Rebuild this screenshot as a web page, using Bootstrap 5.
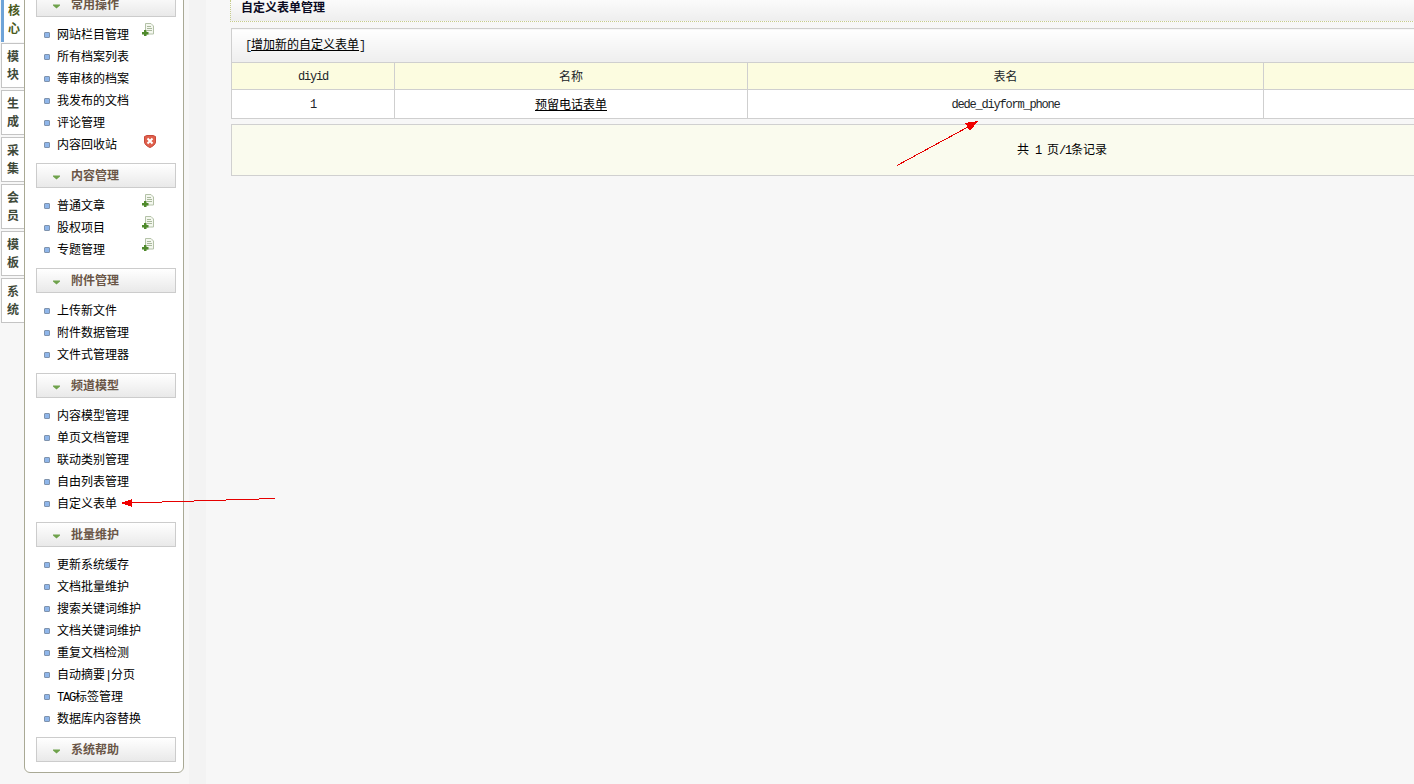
<!DOCTYPE html>
<html lang="zh-CN">
<head>
<meta charset="utf-8">
<title>自定义表单管理</title>
<link href="https://cdn.jsdelivr.net/npm/bootstrap@5.3.0/dist/css/bootstrap.min.css" rel="stylesheet">
<style>
html,body{height:784px;overflow:hidden;}
body{background:#f7f7f7;color:#000;font:12px/22px "Noto Sans CJK SC","Liberation Sans",sans-serif;}
a{color:#000;}
.lat{font-family:"Liberation Mono",monospace;font-size:12px;letter-spacing:-1.2px;}
.side-item .lat{line-height:1;}
.stage{height:784px;overflow:hidden;position:relative;}
.tabs{width:24px;margin-top:-4px;flex:none;}
.tab-item{width:23px;height:45px;margin:0 0 2px 1px;padding-top:3px;background:#fff;border:1px solid #c4c4c4;border-right:0;font-weight:700;line-height:18px;color:#3f4a3a;text-align:center;}
.tab-item.on{border-left:3px solid #6ea3d8;border-top:0;border-bottom:0;color:#4a5a20;height:46px;margin-bottom:1px;padding-top:5px;}
.side{width:160px;flex:none;height:794px;margin-top:-21px;padding:12px 7px 0 11px;background:#fff;border:1px solid #a9a995;border-radius:0 0 6px 6px;}
.side-head{height:25px;border:1px solid #ccc;background:linear-gradient(#fff,#e9e9e9);font-weight:700;color:#6a5647;line-height:22px;padding-left:16px;}
.side-head svg{margin-right:11px;vertical-align:0;}
.side-list{padding:6px 0 0 8px;margin:0 0 8px;}
.side-item{height:22px;line-height:22px;padding-right:20px;}
.dot{width:6px;height:6px;margin:1px 7px 0 0;flex:none;border:1px solid #7f93ad;border-radius:1px;background:#8fb6ea;}
.ico{margin-left:auto;flex:none;}
.ico-page{margin-right:2px;margin-top:0;}
.ico-shield{margin-top:2px;}
.strip{width:17px;margin-left:5px;flex:none;background:#f3f3f3;}
.pane{width:1687px;flex:none;padding-left:24px;}
.title-bar{height:22px;border-bottom:1px dotted #c6cc8a;border-left:1px dotted #c6cc8a;background:linear-gradient(#fbfbfb,#eee);padding-left:10px;font-weight:700;line-height:14px;color:#0a0a22;margin-bottom:6px;margin-left:0;}
.form-tbl{width:1662px;margin-left:1px;table-layout:fixed;--bs-table-border-color:#cfcfcf;--bs-border-color:#cfcfcf;}
.form-tbl.table>*>*>*{padding:0;vertical-align:middle;text-align:center;line-height:18px;border:1px solid #cfcfcf;}
.row-tool{height:34px;}
.row-tool>td{--bs-table-bg:transparent;background:linear-gradient(#fff,#eee);}
.form-tbl.table>*>.row-tool>td{text-align:left;padding:0 0 2px 13px;}
.row-head{height:27px;}
.row-head>td{--bs-table-bg:#fcfce0;}
.row-data{height:29px;}
.row-data>td{--bs-table-bg:#fff;}
.pager-box{width:1662px;height:52px;margin:5px 0 0 1px;background:#fafbee;border:1px solid #d0d0d0;line-height:48px;text-align:center;}
.note-arrow{position:absolute;left:0;top:0;pointer-events:none;}
</style>
</head>
<body>
<svg width="0" height="0" class="d-block position-absolute">
  <defs>
    <symbol id="pg" viewBox="0 0 12 13">
      <path d="M3.5.5h5.500l2.500 2.500v8h-8z" fill="#f4f7ef" stroke="#b4c2a8"/>
      <path d="M5 3.500h4M5 5.500h5M5 7.500h5" stroke="#a9b89c"/>
      <path d="M2 7h2.500v2h2v2.500h-2v1.500h-2.500v-1.500h-2v-2.500h2z" fill="#4f8a2c"/>
    </symbol>
    <symbol id="sh" viewBox="0 0 12 13">
      <path d="M.5 1.500 3 .5h6l2.500 1v5.500c0 2-2.500 4.500-5.500 5.500C3 11.500.5 9 .5 7z" fill="#e0604c" stroke="#c8493a"/>
      <path d="M3.500 3.500l5 5M8.500 3.500l-5 5" stroke="#fff" stroke-width="2"/>
    </symbol>
    <symbol id="cv" viewBox="0 0 7 5">
      <path d="M0 .5h7v1L3.500 4.500 0 1.500z" fill="#6fa24c"/>
    </symbol>
  </defs>
</svg>
<div class="stage d-flex">
  <div class="tabs">
    <div class="tab-item on">核<br>心</div>
    <div class="tab-item">模<br>块</div>
    <div class="tab-item">生<br>成</div>
    <div class="tab-item">采<br>集</div>
    <div class="tab-item">会<br>员</div>
    <div class="tab-item">模<br>板</div>
    <div class="tab-item">系<br>统</div>
  </div>
  <div class="side">
    <div class="side-head"><svg width="7" height="5"><use href="#cv"/></svg>常用操作</div>
    <ul class="side-list list-unstyled">
      <li class="side-item d-flex align-items-center"><i class="dot"></i>网站栏目管理<svg class="ico ico-page align-self-start" width="12" height="13"><use href="#pg"/></svg></li>
      <li class="side-item d-flex align-items-center"><i class="dot"></i>所有档案列表</li>
      <li class="side-item d-flex align-items-center"><i class="dot"></i>等审核的档案</li>
      <li class="side-item d-flex align-items-center"><i class="dot"></i>我发布的文档</li>
      <li class="side-item d-flex align-items-center"><i class="dot"></i>评论管理</li>
      <li class="side-item d-flex align-items-center"><i class="dot"></i>内容回收站<svg class="ico ico-shield align-self-start" width="12" height="13"><use href="#sh"/></svg></li>
    </ul>
    <div class="side-head"><svg width="7" height="5"><use href="#cv"/></svg>内容管理</div>
    <ul class="side-list list-unstyled">
      <li class="side-item d-flex align-items-center"><i class="dot"></i>普通文章<svg class="ico ico-page align-self-start" width="12" height="13"><use href="#pg"/></svg></li>
      <li class="side-item d-flex align-items-center"><i class="dot"></i>股权项目<svg class="ico ico-page align-self-start" width="12" height="13"><use href="#pg"/></svg></li>
      <li class="side-item d-flex align-items-center"><i class="dot"></i>专题管理<svg class="ico ico-page align-self-start" width="12" height="13"><use href="#pg"/></svg></li>
    </ul>
    <div class="side-head"><svg width="7" height="5"><use href="#cv"/></svg>附件管理</div>
    <ul class="side-list list-unstyled">
      <li class="side-item d-flex align-items-center"><i class="dot"></i>上传新文件</li>
      <li class="side-item d-flex align-items-center"><i class="dot"></i>附件数据管理</li>
      <li class="side-item d-flex align-items-center"><i class="dot"></i>文件式管理器</li>
    </ul>
    <div class="side-head"><svg width="7" height="5"><use href="#cv"/></svg>频道模型</div>
    <ul class="side-list list-unstyled">
      <li class="side-item d-flex align-items-center"><i class="dot"></i>内容模型管理</li>
      <li class="side-item d-flex align-items-center"><i class="dot"></i>单页文档管理</li>
      <li class="side-item d-flex align-items-center"><i class="dot"></i>联动类别管理</li>
      <li class="side-item d-flex align-items-center"><i class="dot"></i>自由列表管理</li>
      <li class="side-item d-flex align-items-center"><i class="dot"></i>自定义表单</li>
    </ul>
    <div class="side-head"><svg width="7" height="5"><use href="#cv"/></svg>批量维护</div>
    <ul class="side-list list-unstyled">
      <li class="side-item d-flex align-items-center"><i class="dot"></i>更新系统缓存</li>
      <li class="side-item d-flex align-items-center"><i class="dot"></i>文档批量维护</li>
      <li class="side-item d-flex align-items-center"><i class="dot"></i>搜索关键词维护</li>
      <li class="side-item d-flex align-items-center"><i class="dot"></i>文档关键词维护</li>
      <li class="side-item d-flex align-items-center"><i class="dot"></i>重复文档检测</li>
      <li class="side-item d-flex align-items-center"><i class="dot"></i><span>自动摘要<span class="lat">|</span>分页</span></li>
      <li class="side-item d-flex align-items-center"><i class="dot"></i><span><span class="lat">TAG</span>标签管理</span></li>
      <li class="side-item d-flex align-items-center"><i class="dot"></i>数据库内容替换</li>
    </ul>
    <div class="side-head"><svg width="7" height="5"><use href="#cv"/></svg>系统帮助</div>
  </div>
  <div class="strip"></div>
  <div class="pane">
    <div class="title-bar">自定义表单管理</div>
    <table class="table table-bordered form-tbl mb-0">
      <colgroup><col style="width:163px"><col style="width:353px"><col style="width:516px"><col></colgroup>
      <tbody>
        <tr class="row-tool"><td colspan="4"><span class="lat">[</span><a href="#">增加新的自定义表单</a><span class="lat">]</span></td></tr>
        <tr class="row-head"><td><span class="lat">diyid</span></td><td>名称</td><td>表名</td><td></td></tr>
        <tr class="row-data"><td><span class="lat">1</span></td><td><a href="#">预留电话表单</a></td><td><span class="lat">dede_diyform_phone</span></td><td></td></tr>
      </tbody>
    </table>
    <div class="pager-box">共<span class="lat"> 1 </span>页<span class="lat">/1</span>条记录</div>
  </div>
  <svg class="note-arrow" width="1414" height="784" shape-rendering="crispEdges">
    <path d="M275 498.500 130 503" stroke="#e60000" fill="none"/>
    <path d="M121 503l11-4v8z" fill="#f00000"/>
    <path d="M897 165.500 968 127" stroke="#e60000" fill="none"/>
    <path d="M978 121l-13 2 5 8z" fill="#f00000"/>
  </svg>
</div>
<script src="https://cdn.jsdelivr.net/npm/bootstrap@5.3.0/dist/js/bootstrap.bundle.min.js"></script>
</body>
</html>
